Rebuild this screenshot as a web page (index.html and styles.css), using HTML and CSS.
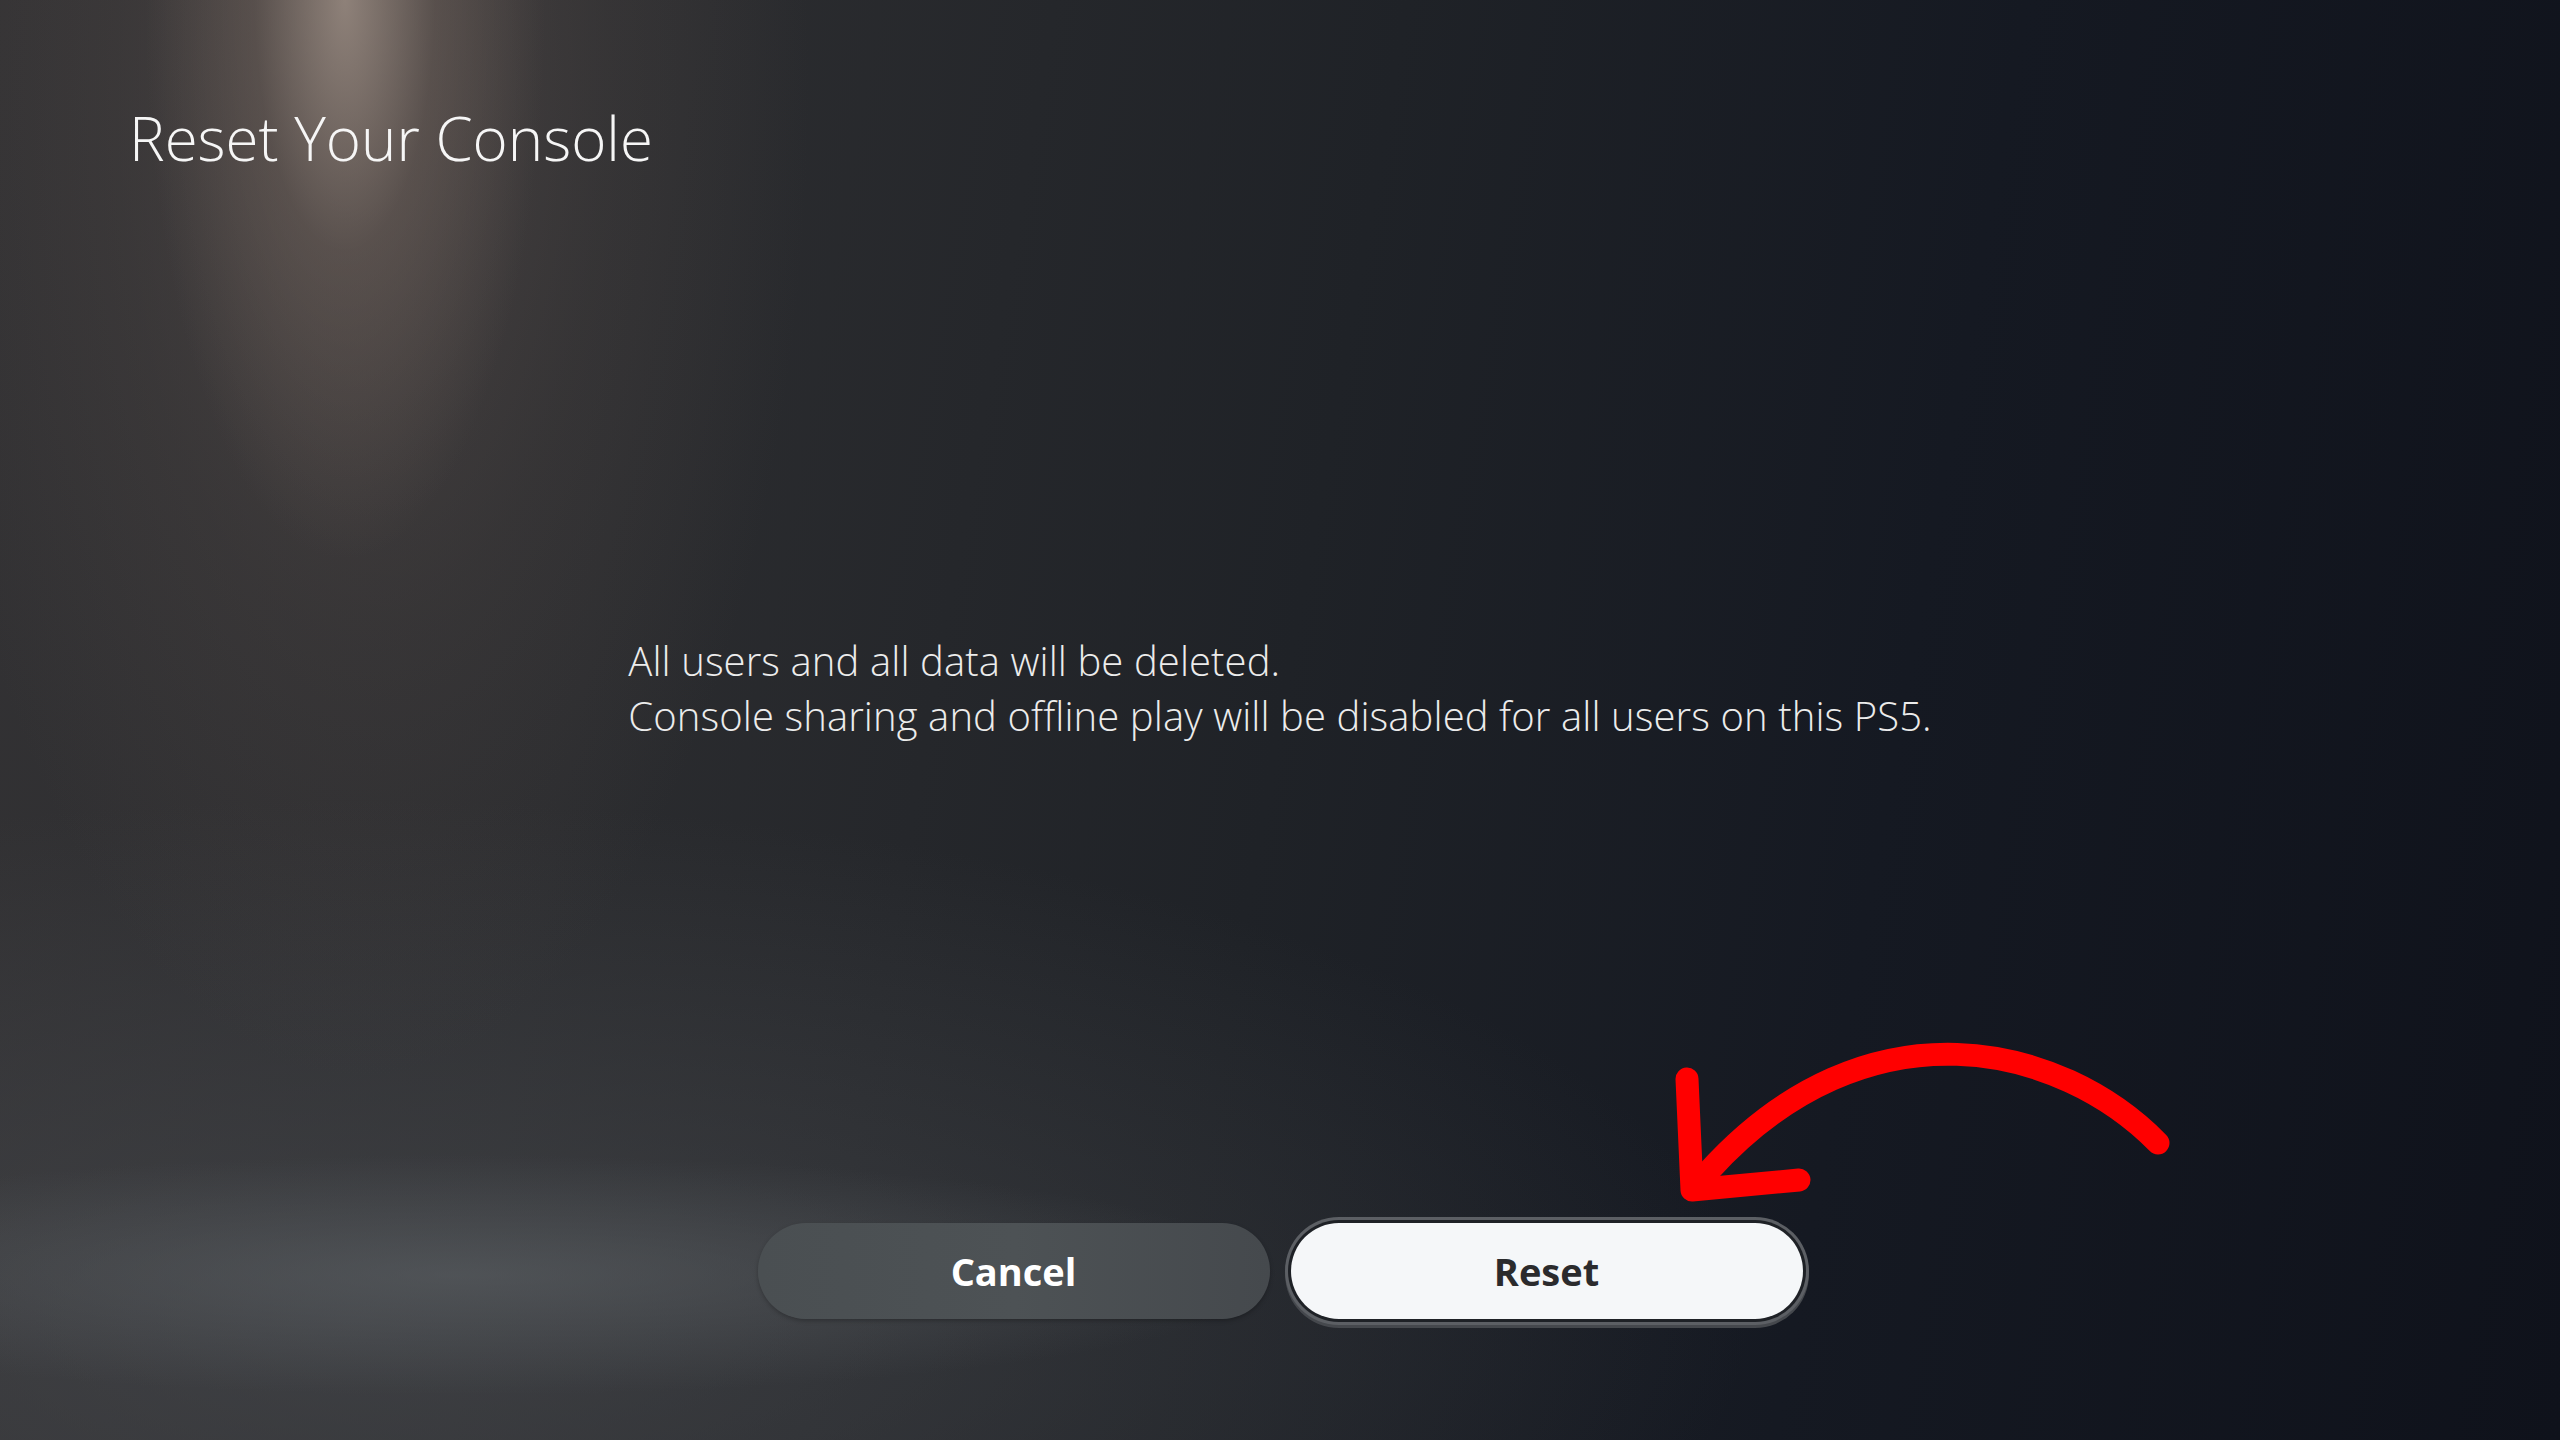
FILE: index.html
```html
<!DOCTYPE html>
<html>
<meta charset="UTF-8">
<meta name="viewport" content="width=device-width, initial-scale=1.0">

<head>
    <title>Reset Your Console</title>
    <link rel="stylesheet" href="styles.css">
</head>

<body>
    <div class="screen">
        <div class="header">
            <h1>Reset Your Console</h1>
        </div>

        <div class="message">
            <p>All users and all data will be deleted.<br>
                Console sharing and offline play will be disabled for all users on this PS5.</p>
        </div>

        <div class="actions">
            <button class="btn btn-cancel">Cancel</button>
            <button class="btn btn-reset">Reset</button>
        </div>

        <!-- red annotation arrow pointing at the Reset button -->
        <svg class="annotation" viewBox="0 0 2560 1440">
            <path d="M2158 1143 C2062 1045 1868 995 1708 1172" />
            <path d="M1687 1079 L1692 1190 L1799 1180" />
        </svg>
    </div>
</body>

</html>
```

FILE: styles.css
```css
html,
body {
    margin: 0;
    padding: 0;
}

body {
    font-family: "Open Sans", "Noto Sans", sans-serif;
    color: #ffffff;
    background-color: #1a1d22;
}

.screen {
    position: relative;
    width: 2560px;
    height: 1440px;
    overflow: hidden;
    display: flex;
    flex-direction: column;
    background:
        radial-gradient(ellipse 200px 560px at 345px 0, rgba(160, 145, 135, 0.8) 0%, rgba(120, 106, 98, 0.4) 45%, rgba(90, 80, 76, 0) 100%),
        radial-gradient(ellipse 450px 1000px at 360px 80px, rgba(100, 88, 84, 0.5) 0%, rgba(90, 80, 76, 0.22) 55%, rgba(90, 80, 76, 0) 100%),
        radial-gradient(ellipse 820px 120px at 460px 1275px, rgba(95, 100, 104, 0.55) 0%, rgba(95, 100, 104, 0) 100%),
        radial-gradient(ellipse 1400px 520px at 350px 1320px, rgba(72, 74, 78, 0.65) 0%, rgba(72, 74, 78, 0) 100%),
        linear-gradient(100deg, #333234 0%, #2b2c2f 25%, #1f2227 50%, #151922 72%, #0f121b 100%);
}

.header {
    padding: 98px 0 0 129px;
}

.header h1 {
    margin: 0;
    font-size: 60px;
    font-weight: 300;
    line-height: 80px;
    color: #f6f6f6;
}

.message {
    display: flex;
    justify-content: center;
    margin-top: 455px;
}

.message p {
    margin: 0;
    font-size: 40px;
    font-weight: 300;
    letter-spacing: 0.1px;
    line-height: 55px;
    color: #ececec;
}

.actions {
    display: flex;
    justify-content: center;
    gap: 21px;
    margin-top: 480px;
}

.btn {
    width: 512px;
    height: 96px;
    border: none;
    border-radius: 48px;
    font-family: "Open Sans", "Noto Sans", sans-serif;
    font-size: 38px;
    font-weight: 700;
    padding: 0;
}

.btn-cancel {
    background: linear-gradient(90deg, #4a4f52 0%, #4d5255 50%, #45494d 100%);
    color: #ffffff;
    box-shadow: 0 2px 4px rgba(0, 0, 0, 0.25);
}

.btn-reset {
    background-color: #f5f7f9;
    color: #2b2b2d;
    box-shadow: 0 0 0 3px #1e2126, 0 0 0 6px #5c5f64, 0 3px 0 6px #45484d;
}

.annotation {
    position: absolute;
    top: 0;
    left: 0;
    width: 2560px;
    height: 1440px;
    pointer-events: none;
}

.annotation path {
    fill: none;
    stroke: #ff0000;
    stroke-width: 23;
    stroke-linecap: round;
    stroke-linejoin: round;
}
```
